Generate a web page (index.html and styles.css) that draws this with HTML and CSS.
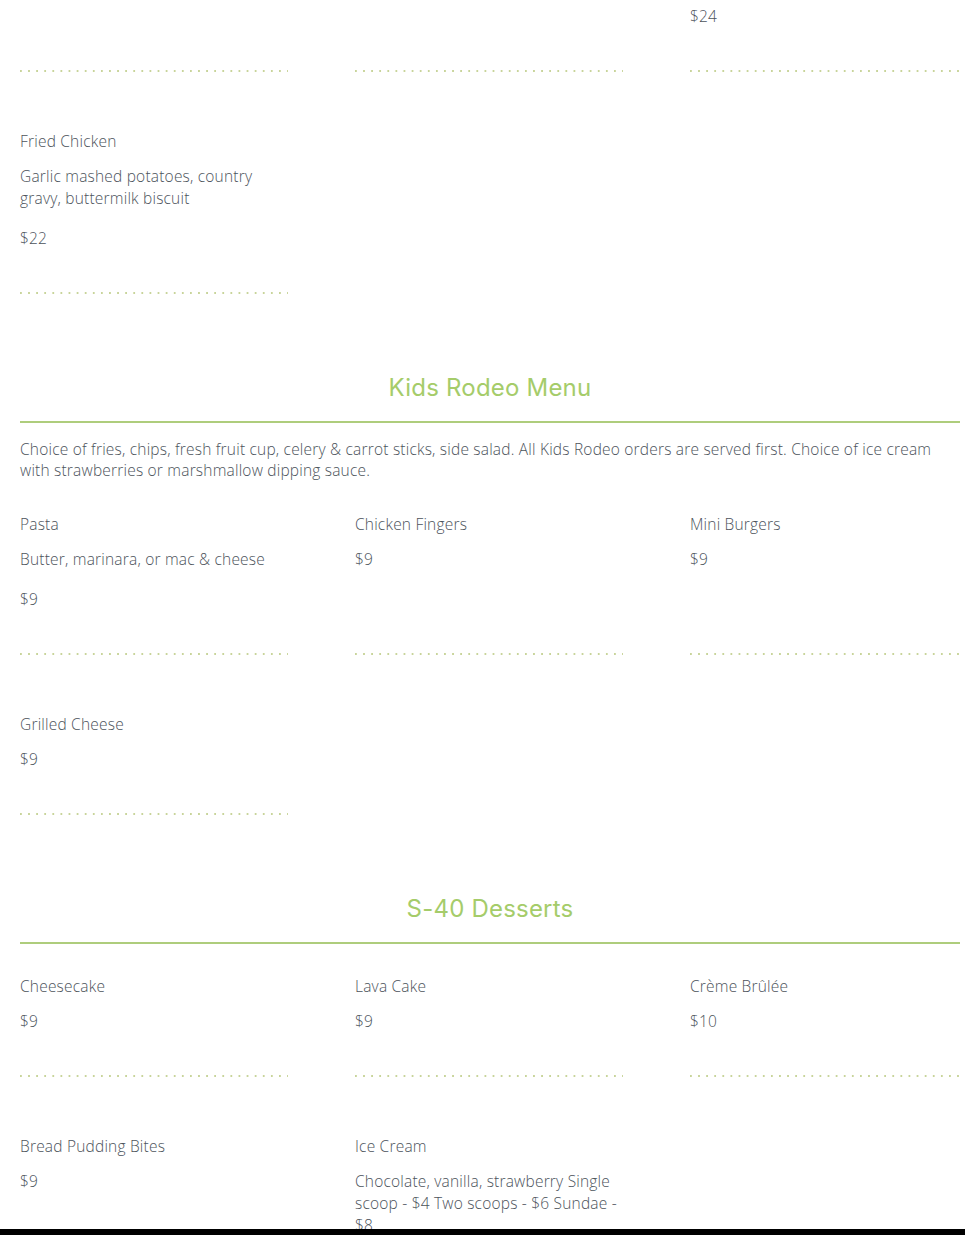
FILE: index.html
```html
<!DOCTYPE html>
<html lang="en">
<head>
<meta charset="utf-8">
<title>Menu</title>
<link rel="stylesheet" href="styles.css">
</head>
<body>
<main class="menu">
  <section class="section section-first">
    <div class="grid">
      <div class="item"><div class="dots"></div></div>
      <div class="item"><div class="dots"></div></div>
      <div class="item"><p class="price">$24</p><div class="dots"></div></div>
      <div class="item">
        <p class="name">Fried Chicken</p>
        <p class="desc">Garlic mashed potatoes, country gravy, buttermilk biscuit</p>
        <p class="price">$22</p>
        <div class="dots"></div>
      </div>
    </div>
  </section>

  <section class="section">
    <h2 class="title">Kids Rodeo Menu</h2>
    <hr class="rule">
    <p class="intro">Choice of fries, chips, fresh fruit cup, celery &amp; carrot sticks, side salad. All Kids Rodeo orders are served first. Choice of ice cream with strawberries or marshmallow dipping sauce.</p>
    <div class="grid">
      <div class="item">
        <p class="name">Pasta</p>
        <p class="desc">Butter, marinara, or mac &amp; cheese</p>
        <p class="price">$9</p>
        <div class="dots"></div>
      </div>
      <div class="item">
        <p class="name">Chicken Fingers</p>
        <p class="price">$9</p>
        <div class="dots"></div>
      </div>
      <div class="item">
        <p class="name">Mini Burgers</p>
        <p class="price">$9</p>
        <div class="dots"></div>
      </div>
      <div class="item">
        <p class="name">Grilled Cheese</p>
        <p class="price">$9</p>
        <div class="dots"></div>
      </div>
    </div>
  </section>

  <section class="section">
    <h2 class="title">S-40 Desserts</h2>
    <hr class="rule rule-tight">
    <div class="grid">
      <div class="item">
        <p class="name">Cheesecake</p>
        <p class="price">$9</p>
        <div class="dots"></div>
      </div>
      <div class="item">
        <p class="name">Lava Cake</p>
        <p class="price">$9</p>
        <div class="dots"></div>
      </div>
      <div class="item">
        <p class="name">Crème Brûlée</p>
        <p class="price">$10</p>
        <div class="dots"></div>
      </div>
      <div class="item">
        <p class="name">Bread Pudding Bites</p>
        <p class="price">$9</p>
        <div class="dots"></div>
      </div>
      <div class="item">
        <p class="name">Ice Cream</p>
        <p class="desc desc-wide">Chocolate, vanilla, strawberry Single scoop - $4 Two scoops - $6 Sundae - $8</p>
        <p class="price">$4</p>
        <div class="dots"></div>
      </div>
    </div>
  </section>
</main>
<div class="bottom-bar"></div>
</body>
</html>
```

FILE: styles.css
```css
html, body {
  margin: 0;
  padding: 0;
  background: #ffffff;
}

body {
  font-family: "Open Sans", "Noto Sans", sans-serif;
  font-weight: 300;
  color: #4c535b;
  font-size: 15.5px;
  letter-spacing: 0.2px;
}

.menu {
  padding: 5px 5px 0 20px;
}

.section {
  padding-top: 77px;
}

.section-first {
  padding-top: 0;
}

.grid {
  display: grid;
  grid-template-columns: 268px 268px 1fr;
  column-gap: 67px;
  row-gap: 58px;
}

.item {
  display: flex;
  flex-direction: column;
}

.item p {
  margin: 0;
  line-height: 22px;
}

.name {
  margin-bottom: 13px !important;
}

.desc {
  margin-bottom: 18px !important;
  padding-right: 6px;
}

.desc-wide {
  margin-right: -6px;
}

.dots {
  margin-top: auto;
  padding-top: 43px;
}

.dots::after {
  content: "";
  display: block;
  height: 2px;
  background-image: radial-gradient(circle at 1px 1px, #c8d49a 0.9px, transparent 1.1px);
  background-size: 8.1px 2px;
  background-repeat: repeat-x;
}

.title {
  margin: 0;
  text-align: center;
  font-family: "Inter", "Roboto", sans-serif;
  font-weight: 400;
  font-size: 24px;
  line-height: 34px;
  color: #a5cc6a;
  letter-spacing: 0.2px;
}

.rule {
  margin: 16px 0 0;
  border: 0;
  height: 2px;
  background: #aecd7c;
}

.intro {
  margin: 16px 0 32px;
  line-height: 21px;
  padding-right: 20px;
}

.rule-tight {
  margin-bottom: 31px;
}

.bottom-bar {
  position: fixed;
  left: 0;
  right: 0;
  bottom: 0;
  height: 6px;
  background: #000000;
}
```
